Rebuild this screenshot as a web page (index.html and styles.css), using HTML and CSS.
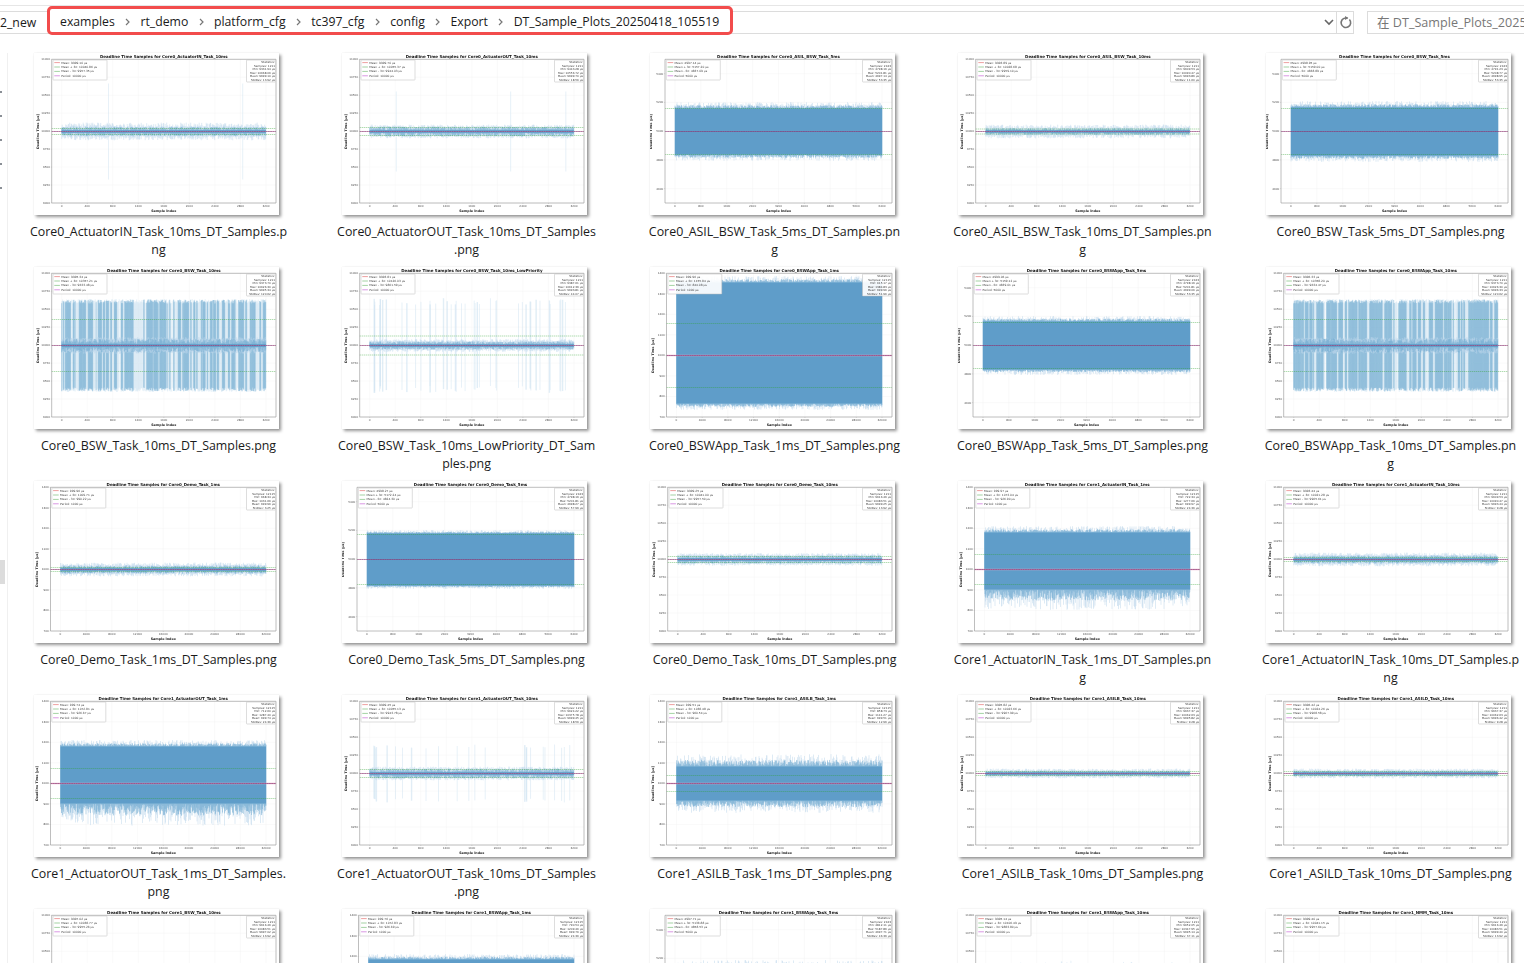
FILE: index.html
```html
<!DOCTYPE html>
<html lang="en">
<head>
<meta charset="utf-8">
<title>DT_Sample_Plots_20250418_105519</title>
<link rel="stylesheet" href="styles.css">
</head>
<body>
<header class="toolbar">
  <div class="address">
    <span class="crumb-root">2_new</span>
    <nav class="crumbs">
      <span>examples</span><svg class="sep" viewBox="0 0 6 8"><path d="M1.5 1l3 3-3 3"/></svg>
      <span>rt_demo</span><svg class="sep" viewBox="0 0 6 8"><path d="M1.5 1l3 3-3 3"/></svg>
      <span>platform_cfg</span><svg class="sep" viewBox="0 0 6 8"><path d="M1.5 1l3 3-3 3"/></svg>
      <span>tc397_cfg</span><svg class="sep" viewBox="0 0 6 8"><path d="M1.5 1l3 3-3 3"/></svg>
      <span>config</span><svg class="sep" viewBox="0 0 6 8"><path d="M1.5 1l3 3-3 3"/></svg>
      <span>Export</span><svg class="sep" viewBox="0 0 6 8"><path d="M1.5 1l3 3-3 3"/></svg>
      <span>DT_Sample_Plots_20250418_105519</span>
    </nav>
    <svg class="drop" viewBox="0 0 10 8"><path d="M1 2l4 4 4-4"/></svg>
    <div class="refresh"><svg viewBox="0 0 12 12"><path d="M9.6 3.2A4.4 4.4 0 1 1 6 1.8H8"/><path class="tip" d="M5.6 0L8.6 1.8 5.6 3.6z"/></svg></div>
  </div>
  <div class="search">在 DT_Sample_Plots_20250418_105519</div>
</header>
<main class="body">
  <aside class="nav">
    <div class="nav-dots"><i></i><i></i><i></i><i></i><i></i></div>
    <div class="nav-thumb"></div>
  </aside>
  <section class="grid">
    <figure class="item" data-title="Core0_ActuatorIN_Task_10ms" data-scale="10" data-up="3.5" data-down="3.5" data-fuzz="5" data-green="3" data-fixed="0.229,0.886" data-reach="48"><div class="thumb"></div><figcaption>Core0_ActuatorIN_Task_10ms_DT_Samples.p<br>ng</figcaption></figure>
    <figure class="item" data-title="Core0_ActuatorOUT_Task_10ms" data-scale="10" data-up="3.5" data-down="3.5" data-fuzz="3" data-green="4" data-fixed="0.13,0.69,0.96" data-reach="40"><div class="thumb"></div><figcaption>Core0_ActuatorOUT_Task_10ms_DT_Samples<br>.png</figcaption></figure>
    <figure class="item" data-title="Core0_ASIL_BSW_Task_5ms" data-scale="5" data-up="23" data-down="23" data-fuzz="6" data-green="23"><div class="thumb"></div><figcaption>Core0_ASIL_BSW_Task_5ms_DT_Samples.pn<br>g</figcaption></figure>
    <figure class="item" data-title="Core0_ASIL_BSW_Task_10ms" data-scale="10" data-up="2.5" data-down="2.5" data-fuzz="4" data-green="2.5"><div class="thumb"></div><figcaption>Core0_ASIL_BSW_Task_10ms_DT_Samples.pn<br>g</figcaption></figure>
    <figure class="item" data-title="Core0_BSW_Task_5ms" data-scale="5" data-up="24" data-down="24" data-fuzz="6" data-green="23"><div class="thumb"></div><figcaption>Core0_BSW_Task_5ms_DT_Samples.png</figcaption></figure>

    <figure class="item" data-title="Core0_BSW_Task_10ms" data-scale="10" data-up="5" data-down="5" data-fuzz="3" data-green="26" data-dense="0.6" data-reach="45"><div class="thumb"></div><figcaption>Core0_BSW_Task_10ms_DT_Samples.png</figcaption></figure>
    <figure class="item" data-title="Core0_BSW_Task_10ms_LowPriority" data-scale="10" data-up="3" data-down="3" data-fuzz="3" data-green="9.5" data-spikes="42" data-reach="44"><div class="thumb"></div><figcaption>Core0_BSW_Task_10ms_LowPriority_DT_Sam<br>ples.png</figcaption></figure>
    <figure class="item" data-title="Core0_BSWApp_Task_1ms" data-scale="1" data-up="73" data-down="48" data-fuzz="6" data-green="32"><div class="thumb"></div><figcaption>Core0_BSWApp_Task_1ms_DT_Samples.png</figcaption></figure>
    <figure class="item" data-title="Core0_BSWApp_Task_5ms" data-scale="5" data-up="24" data-down="24" data-fuzz="5" data-green="23"><div class="thumb"></div><figcaption>Core0_BSWApp_Task_5ms_DT_Samples.png</figcaption></figure>
    <figure class="item" data-title="Core0_BSWApp_Task_10ms" data-scale="10" data-up="5" data-down="5" data-fuzz="3" data-green="26" data-dense="0.65" data-reach="45"><div class="thumb"></div><figcaption>Core0_BSWApp_Task_10ms_DT_Samples.pn<br>g</figcaption></figure>

    <figure class="item" data-title="Core0_Demo_Task_1ms" data-scale="1" data-up="3" data-down="3" data-fuzz="3.5" data-green="2"><div class="thumb"></div><figcaption>Core0_Demo_Task_1ms_DT_Samples.png</figcaption></figure>
    <figure class="item" data-title="Core0_Demo_Task_5ms" data-scale="5" data-up="26" data-down="26" data-fuzz="3" data-green="25"><div class="thumb"></div><figcaption>Core0_Demo_Task_5ms_DT_Samples.png</figcaption></figure>
    <figure class="item" data-title="Core0_Demo_Task_10ms" data-scale="10" data-up="3" data-down="3" data-fuzz="3" data-green="3"><div class="thumb"></div><figcaption>Core0_Demo_Task_10ms_DT_Samples.png</figcaption></figure>
    <figure class="item" data-title="Core1_ActuatorIN_Task_1ms" data-scale="1" data-up="37" data-down="20" data-fuzz-up="6" data-fuzz="20" data-green="15"><div class="thumb"></div><figcaption>Core1_ActuatorIN_Task_1ms_DT_Samples.pn<br>g</figcaption></figure>
    <figure class="item" data-title="Core1_ActuatorIN_Task_10ms" data-scale="10" data-up="3" data-down="3" data-fuzz="3.5" data-green="2"><div class="thumb"></div><figcaption>Core1_ActuatorIN_Task_10ms_DT_Samples.p<br>ng</figcaption></figure>

    <figure class="item" data-title="Core1_ActuatorOUT_Task_1ms" data-scale="1" data-up="37" data-down="20" data-fuzz-up="6" data-fuzz="22" data-green="15"><div class="thumb"></div><figcaption>Core1_ActuatorOUT_Task_1ms_DT_Samples.<br>png</figcaption></figure>
    <figure class="item" data-title="Core1_ActuatorOUT_Task_10ms" data-scale="10" data-up="3.5" data-down="3.5" data-fuzz="3" data-green="4" data-spikes="24" data-reach="27"><div class="thumb"></div><figcaption>Core1_ActuatorOUT_Task_10ms_DT_Samples<br>.png</figcaption></figure>
    <figure class="item" data-title="Core1_ASILB_Task_1ms" data-scale="1" data-up="17" data-down="17" data-fuzz="12" data-green="8"><div class="thumb"></div><figcaption>Core1_ASILB_Task_1ms_DT_Samples.png</figcaption></figure>
    <figure class="item" data-title="Core1_ASILB_Task_10ms" data-scale="10" data-up="2" data-down="2" data-fuzz="2.5" data-green="2"><div class="thumb"></div><figcaption>Core1_ASILB_Task_10ms_DT_Samples.png</figcaption></figure>
    <figure class="item" data-title="Core1_ASILD_Task_10ms" data-scale="10" data-up="2" data-down="2" data-fuzz="2.5" data-green="2"><div class="thumb"></div><figcaption>Core1_ASILD_Task_10ms_DT_Samples.png</figcaption></figure>

    <figure class="item" data-title="Core1_BSW_Task_10ms" data-scale="10" data-up="3" data-down="3" data-fuzz="3" data-green="3"><div class="thumb"></div><figcaption>Core1_BSW_Task_10ms_DT_Samples.png</figcaption></figure>
    <figure class="item" data-title="Core1_BSWApp_Task_1ms" data-scale="1" data-up="38" data-down="30" data-fuzz="5" data-green="15"><div class="thumb"></div><figcaption>Core1_BSWApp_Task_1ms_DT_Samples.png</figcaption></figure>
    <figure class="item" data-title="Core1_BSWApp_Task_5ms" data-scale="5" data-up="18" data-down="18" data-fuzz="9" data-green="20"><div class="thumb"></div><figcaption>Core1_BSWApp_Task_5ms_DT_Samples.png</figcaption></figure>
    <figure class="item" data-title="Core1_BSWApp_Task_10ms" data-scale="10" data-up="4" data-down="4" data-fuzz="3" data-green="8" data-spikes="14" data-reach="25"><div class="thumb"></div><figcaption>Core1_BSWApp_Task_10ms_DT_Samples.png</figcaption></figure>
    <figure class="item" data-title="Core1_NMM_Task_10ms" data-scale="10" data-up="3" data-down="3" data-fuzz="3" data-green="3"><div class="thumb"></div><figcaption>Core1_NMM_Task_10ms_DT_Samples.png</figcaption></figure>
  </section>
</main>
<script src="charts.js"></script>
</body>
</html>
```
FILE: styles.css
```css
* { box-sizing: border-box; }
html, body { margin: 0; height: 963px; overflow: hidden; background: #fff; }
body { width: 1524px; font-family: "Open Sans", "Noto Sans CJK SC", sans-serif; color: #1a1a1a; }

.toolbar { height: 48px; margin-top: 5px; padding-top: 5px; border-top: 1px solid #e6e6e6; display: flex; align-items: flex-start; gap: 13px; width: 1700px; }
.address { width: 1354px; height: 23px; flex: none; border: 1px solid #dcdcdc; border-left: 0; display: flex; align-items: flex-start; font-size: 12.25px; line-height: 18px; }
.crumb-root { width: 47px; flex: none; line-height: 21px; overflow: hidden; }
.crumbs { margin-top: -6px; height: 29px; width: 686px; flex: none; border: 3px solid #f24c4c; border-radius: 5px; padding: 2px 0 0 10px; display: flex; align-items: center; white-space: nowrap; background: #fff; }
.sep { width: 7px; height: 8px; margin: 0 9.35px; flex: none; fill: none; stroke: #777; stroke-width: 1.2; }
.drop { width: 10px; height: 8px; margin: 6px 2px 0 auto; flex: none; fill: none; stroke: #666; stroke-width: 1.6; }
.refresh { width: 17px; height: 21px; flex: none; border-left: 1px solid #dcdcdc; display: flex; align-items: center; justify-content: center; }
.refresh svg { width: 13px; height: 13px; fill: none; stroke: #777; stroke-width: 1.5; }
.refresh .tip { fill: #777; stroke: none; }
.search { width: 300px; height: 23px; flex: none; border: 1px solid #dcdcdc; padding-left: 9px; font-size: 12.6px; line-height: 21px; color: #777; white-space: nowrap; overflow: hidden; }

.body { display: flex; height: 910px; }
.nav { width: 8px; flex: none; border-right: 1px solid #f0f0f0; padding-top: 38px; }
.nav-dots { display: flex; flex-direction: column; gap: 22px; }
.nav-dots i { display: block; width: 2px; height: 2px; background: #8a8f96; }
.nav-thumb { width: 5px; height: 24px; margin-top: 371px; background: #dcdcdc; }

.grid { flex: none; padding-left: 16px; display: grid; grid-template-columns: repeat(5, 265px); column-gap: 43px; grid-auto-rows: 214px; }
.item { margin: 0; display: flex; flex-direction: column; align-items: center; }
.thumb { width: 245px; height: 162px; flex: none; background: #fff; box-shadow: 2px 2px 3px rgba(0, 0, 0, .42), 0 0 1px rgba(0, 0, 0, .1); }
.thumb svg { display: block; width: 245px; height: 162px; filter: blur(.42px); }
figcaption { margin-top: 8px; padding-left: 4px; font-size: 12.4px; line-height: 18px; text-align: center; white-space: nowrap; }

.ttl { font: bold 4px "DejaVu Sans", sans-serif; fill: #111; text-anchor: middle; }
.axl { font: bold 3.3px "DejaVu Sans", sans-serif; fill: #222; text-anchor: middle; }
.tk { font: 2.8px "DejaVu Sans", sans-serif; fill: #555; }
.tk-r { text-anchor: end; }
.tk-m { text-anchor: middle; }
.lg { font: 2.9px "DejaVu Sans", sans-serif; fill: #444; }
.st { font: 2.8px "DejaVu Sans", sans-serif; fill: #444; text-anchor: end; }
.box { fill: #fff; fill-opacity: .92; stroke: #bbb; stroke-width: .5; }
.grid-l { stroke: #f0f0f0; stroke-width: .35; fill: none; }
.spine { stroke: #9a9a9a; stroke-width: .65; fill: none; }
.tick { stroke: #999; stroke-width: .3; fill: none; }
.d-light { stroke: #bcd7ea; stroke-width: .5; fill: none; }
.d-pale { stroke: #cfe2f0; stroke-width: .5; fill: none; }
.d-mid { stroke: #6aa5ce; stroke-width: .45; fill: none; }
.d-solid { fill: #5f9dc9; }
.d-core { stroke: #3f86bb; stroke-width: .45; fill: none; }
.l-green { stroke: #2ca02c; stroke-width: .5; stroke-dasharray: 1.4 .6; stroke-opacity: .75; fill: none; }
.l-halo { stroke: #e8a8c8; stroke-width: 1.6; stroke-opacity: .7; fill: none; }
.l-mean { stroke: #c0405c; stroke-width: .55; stroke-opacity: .7; fill: none; }
.l-period { stroke: #6a2f80; stroke-width: .45; stroke-dasharray: 1.8 .5; fill: none; }
```
FILE: charts.js
```js
var SCALES = {
  "10": { left: 17.7, center: 78.5, period: 10000, unit: 1000 / 71.85, xstep: 400, samples: 1211, hi: 11000, lo: 9000, step: 250 },
  "5": { left: 15, center: 78.5, period: 5000, unit: 500 / 71.85, xstep: 800, samples: 2423, hi: 5500, lo: 4500, step: 200, first: 5400, last: 4600 },
  "1": { left: 16.5, center: 88.5, period: 1000, unit: 700 / 143.7, xstep: 4000, samples: 12115, hi: 1400, lo: 700, step: 100 }
};
var TOP = 6.3, BOTTOM = 150, RIGHT = 242;

function rng(seed) {
  var s = seed;
  return function () {
    s = (s * 1664525 + 1013904223) % 4294967296;
    return s / 4294967296;
  };
}
function esc(s) { return s.replace(/&/g, "&amp;"); }
function n(v) { return (Math.round(v * 100) / 100).toFixed(2); }

function build(fig, index) {
  var d = fig.dataset, S = SCALES[d.scale], R = rng(index * 7919 + 17);
  var L = S.left, c = S.center, dl = L + 10, dr = RIGHT - 10;
  var up = +d.up, down = +d.down, fuzz = +d.fuzz, green = +d.green, reach = +(d.reach || 0);
  var fuzzUp = d.fuzzUp ? +d.fuzzUp : fuzz;
  var narrow = up < 8;
  var out = [];
  var yOf = function (v) { return TOP + (S.hi - v) / (S.hi - S.lo) * (BOTTOM - TOP); };
  var xOf = function (i) { return dl + i * (dr - dl) / 8; };
  var i, x, g = "", t = "";

  var first = S.first || S.hi, last = S.last || S.lo;
  for (var v = first; v >= last; v -= S.step) {
    var y = yOf(v).toFixed(2);
    g += "M" + L + " " + y + "H" + RIGHT;
    t += "M" + (L - 1) + " " + y + "H" + L;
    out.push('<text class="tk tk-r" x="' + (L - 1.6) + '" y="' + (+y + 1) + '">' + v + "</text>");
  }
  for (i = 0; i <= 8; i++) {
    x = xOf(i).toFixed(2);
    g += "M" + x + " " + TOP + "V" + BOTTOM;
    t += "M" + x + " " + BOTTOM + "v1";
    out.push('<text class="tk tk-m" x="' + x + '" y="' + (BOTTOM + 3.8) + '">' + i * S.xstep + "</text>");
  }
  out.unshift('<path class="grid-l" d="' + g + '"/><path class="tick" d="' + t + '"/>');

  var light = "", mid = "", pale = "", spike = "";
  for (x = dl; x <= dr; x += 0.5) {
    var r1 = R(), r2 = R();
    light += "M" + x + " " + (c - up - Math.pow(r1, 1.6) * fuzzUp - 0.4).toFixed(2) + "V" + (c + down + Math.pow(r2, 1.6) * fuzz + 0.4).toFixed(2);
    var mu = Math.max(1.6, fuzzUp * 0.55), md = Math.max(1.6, fuzz * 0.55);
    if (narrow) {
      mid += "M" + x + " " + (c - up * (0.3 + R() * 1.1)).toFixed(2) + "V" + (c + down * (0.3 + R() * 1.1)).toFixed(2);
    } else {
      mid += "M" + x + " " + (c - up - R() * mu).toFixed(2) + "V" + (c + down + R() * md).toFixed(2);
    }
    if (d.dense) {
      var j1 = reach - 3 + R() * 4.5, j2 = reach - 3 + R() * 4.5;
      if (R() < 0.9) pale += "M" + x + " " + (c - j1).toFixed(2) + "V" + (c + j2).toFixed(2);
    }
  }
  if (d.dense) {
    /* clusters of samples that reach the far band */
    x = dl;
    while (x < dr) {
      var run = 0.5 + Math.floor(R() * 4) * 0.5;
      if (R() < +d.dense) {
        for (var q = x; q < Math.min(x + run, dr); q += 0.5) {
          spike += "M" + q + " " + (c - reach + 3 - R() * 4).toFixed(2) + "V" + (c + reach - 3 + R() * 4).toFixed(2);
        }
      }
      x += run;
    }
  }
  var sparse = "";
  if (d.spikes) {
    for (i = 0; i < +d.spikes; i++) {
      x = dl + R() * (dr - dl);
      var a = reach * (0.92 + R() * 0.16), b = reach * (0.92 + R() * 0.16);
      sparse += "M" + x.toFixed(2) + " " + (c - a).toFixed(2) + "V" + (c + b).toFixed(2);
      if (R() < 0.3) sparse += "M" + (x + 0.5).toFixed(2) + " " + (c - a).toFixed(2) + "V" + (c + b).toFixed(2);
    }
  }
  if (d.fixed) {
    d.fixed.split(",").forEach(function (f) {
      x = dl + +f * (dr - dl);
      sparse += "M" + x.toFixed(2) + " " + (c - reach).toFixed(2) + "V" + (c + reach).toFixed(2);
    });
  }
  if (pale) out.push('<path class="d-pale" d="' + pale + '"/>');
  if (sparse) out.push('<path class="d-pale" d="' + sparse + '"/>');
  if (spike) out.push('<path class="d-mid" d="' + spike + '"/>');
  out.push('<path class="d-light" d="' + light + '"/>');
  out.push('<path class="d-mid" d="' + mid + '"/>');
  if (narrow) {
    out.push('<path class="d-core" d="M' + dl + " " + (c - 1) + "H" + dr + "M" + dl + " " + (c + 1) + "H" + dr + '"/>');
  } else {
    out.push('<rect class="d-solid" x="' + dl + '" y="' + (c - up) + '" width="' + (dr - dl) + '" height="' + (up + down) + '"/>');
  }

  out.push('<path class="l-green" d="M' + L + " " + (c - green) + "H" + RIGHT + "M" + L + " " + (c + green) + "H" + RIGHT + '"/>');
  if (d.scale === "1" && !narrow) out.push('<path class="l-halo" d="M' + L + " " + c + "H" + RIGHT + '"/>');
  out.push('<path class="l-mean" d="M' + L + " " + c + "H" + RIGHT + '"/>');
  out.push('<path class="l-period" d="M' + L + " " + c + "H" + RIGHT + '"/>');
  out.push('<path class="spine" d="M' + L + " " + TOP + "H" + RIGHT + "V" + BOTTOM + "H" + L + 'Z"/>');

  var mean = S.period - R() * 7 * (S.period / 10000);
  var plus = mean + green * S.unit, minus = mean - green * S.unit;
  var lines = [
    ["Mean: " + n(mean) + " µs", "#e06060"],
    ["Mean + 3σ: " + n(plus) + " µs", "#64b464"],
    ["Mean - 3σ: " + n(minus) + " µs", "#64b464"],
    ["Period: " + S.period + " µs", "#c050d0"]
  ];
  out.push('<rect class="box" x="' + (L + 1.3) + '" y="7" width="54" height="20" rx=".6"/>');
  lines.forEach(function (l, k) {
    var ly = 9.6 + k * 4.4;
    out.push('<path d="M' + (L + 2.6) + " " + ly + "h5.6" + '" stroke="' + l[1] + '" stroke-width=".6"/>');
    out.push('<text class="lg" x="' + (L + 9.6) + '" y="' + (ly + 1) + '">' + esc(l[0]) + "</text>");
  });

  var spread = Math.max(reach, up + fuzz) * S.unit;
  var stats = ["Statistics:", "Samples: " + S.samples, "Min: " + n(S.period - spread) + " µs", "Max: " + n(S.period + spread) + " µs", "Mean: " + n(mean) + " µs", "StdDev: " + n(green * S.unit / 3) + " µs"];
  out.push('<rect class="box" x="' + (RIGHT - 29.5) + '" y="7" width="29" height="22" rx=".6"/>');
  stats.forEach(function (s, k) {
    out.push('<text class="st" x="' + (RIGHT - 1) + '" y="' + (10 + k * 3.55) + '">' + s + "</text>");
  });

  var mx = (L + RIGHT) / 2;
  out.push('<text class="ttl" x="' + mx + '" y="4.8">Deadline Time Samples for ' + d.title + "</text>");
  out.push('<text class="axl" x="' + mx + '" y="159">Sample Index</text>');
  out.push('<text class="axl" transform="translate(' + (L - 13) + " " + c + ') rotate(-90)">Deadline Time [µs]</text>');

  fig.querySelector(".thumb").innerHTML = '<svg viewBox="0 0 245 162" xmlns="http://www.w3.org/2000/svg">' + out.join("") + "</svg>";
}

Array.prototype.forEach.call(document.querySelectorAll(".item"), build);
```
